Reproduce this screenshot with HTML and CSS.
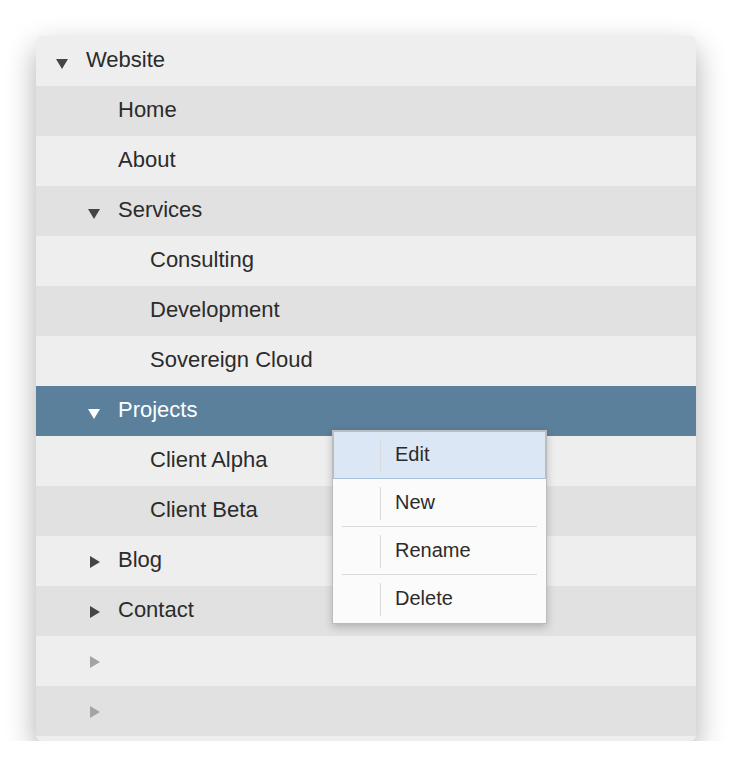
FILE: index.html
```html
<!DOCTYPE html>
<html lang="en">
<head>
  <meta charset="UTF-8" />
  <title>Site Tree</title>
  <link rel="stylesheet" href="styles.css">
</head>
<body>
  <div class="tree">
    <div class="row lvl0"><span class="arrow down"></span><span class="label">Website</span></div>
    <div class="row lvl1"><span class="arrow none"></span><span class="label">Home</span></div>
    <div class="row lvl1"><span class="arrow none"></span><span class="label">About</span></div>
    <div class="row lvl1"><span class="arrow down"></span><span class="label">Services</span></div>
    <div class="row lvl2"><span class="arrow none"></span><span class="label">Consulting</span></div>
    <div class="row lvl2"><span class="arrow none"></span><span class="label">Development</span></div>
    <div class="row lvl2"><span class="arrow none"></span><span class="label">Sovereign Cloud</span></div>
    <div class="row lvl1 selected"><span class="arrow down"></span><span class="label">Projects</span></div>
    <div class="row lvl2"><span class="arrow none"></span><span class="label">Client Alpha</span></div>
    <div class="row lvl2"><span class="arrow none"></span><span class="label">Client Beta</span></div>
    <div class="row lvl1"><span class="arrow right"></span><span class="label">Blog</span></div>
    <div class="row lvl1"><span class="arrow right"></span><span class="label">Contact</span></div>
    <div class="row lvl1 empty"><span class="arrow right"></span><span class="label"></span></div>
    <div class="row lvl1 empty"><span class="arrow right"></span><span class="label"></span></div>
    <div class="row lvl1 empty"></div>
  </div>

  <div class="menu">
    <div class="menu-item active"><span class="icon"></span><span class="text">Edit</span></div>
    <div class="menu-item"><span class="icon"></span><span class="text">New</span></div>
    <div class="sep"></div>
    <div class="menu-item"><span class="icon"></span><span class="text">Rename</span></div>
    <div class="sep"></div>
    <div class="menu-item"><span class="icon"></span><span class="text">Delete</span></div>
  </div>
</body>
</html>
```

FILE: styles.css
```css
body {
  margin: 0;
  background: #ffffff;
  font-family: "Liberation Sans", Arial, sans-serif;
  color: #2b2b2b;
}
.tree {
  margin: 36px 0 0 36px;
  width: 660px;
  height: 705px;
  overflow: hidden;
  border-radius: 6px;
  box-shadow: 0 12px 30px rgba(0, 0, 0, 0.32);
  background: #eeeeee;
}
.row {
  display: flex;
  align-items: center;
  height: 50px;
  font-size: 22px;
  background: #eeeeee;
}
.row:nth-child(even) {
  background: #e1e1e1;
}
.row.selected {
  background: #5a809c;
  color: #ffffff;
}
.lvl0 { padding-left: 20px; }
.lvl1 { padding-left: 52px; }
.lvl2 { padding-left: 84px; }
.arrow {
  width: 30px;
  height: 12px;
  flex: none;
  position: relative;
}
.arrow.down::before {
  content: "";
  position: absolute;
  left: 0;
  top: 4px;
  border-left: 6px solid transparent;
  border-right: 6px solid transparent;
  border-top: 10px solid #444444;
}
.selected .arrow.down::before {
  border-top-color: #ffffff;
}
.arrow.right::before {
  content: "";
  position: absolute;
  left: 2px;
  top: 1px;
  border-top: 6px solid transparent;
  border-bottom: 6px solid transparent;
  border-left: 10px solid #444444;
}
.empty .arrow.right::before {
  border-left-color: #a3a3a3;
}
.label {
  line-height: 1;
  padding-bottom: 2px;
}

/* popup menu */
.menu {
  position: absolute;
  left: 332px;
  top: 430px;
  width: 213px;
  background: #fbfbfb;
  border: 1px solid #bcbcbc;
  box-shadow: 0 3px 8px rgba(0, 0, 0, 0.22);
  font-size: 20px;
}
.menu-item {
  display: flex;
  align-items: center;
  height: 48px;
  box-sizing: border-box;
}
.menu-item.active {
  background: #dce7f5;
  border: 1px solid #a9c2dc;
}
.icon {
  width: 47px;
  height: 33px;
  flex: none;
  border-right: 1px solid #dadada;
  margin-right: 14px;
}
.menu-item.active .icon {
  width: 46px;
}
.text {
  padding-bottom: 2px;
}
.sep {
  height: 1px;
  background: #dadada;
  margin: -1px 9px 0;
  position: relative;
}
```
